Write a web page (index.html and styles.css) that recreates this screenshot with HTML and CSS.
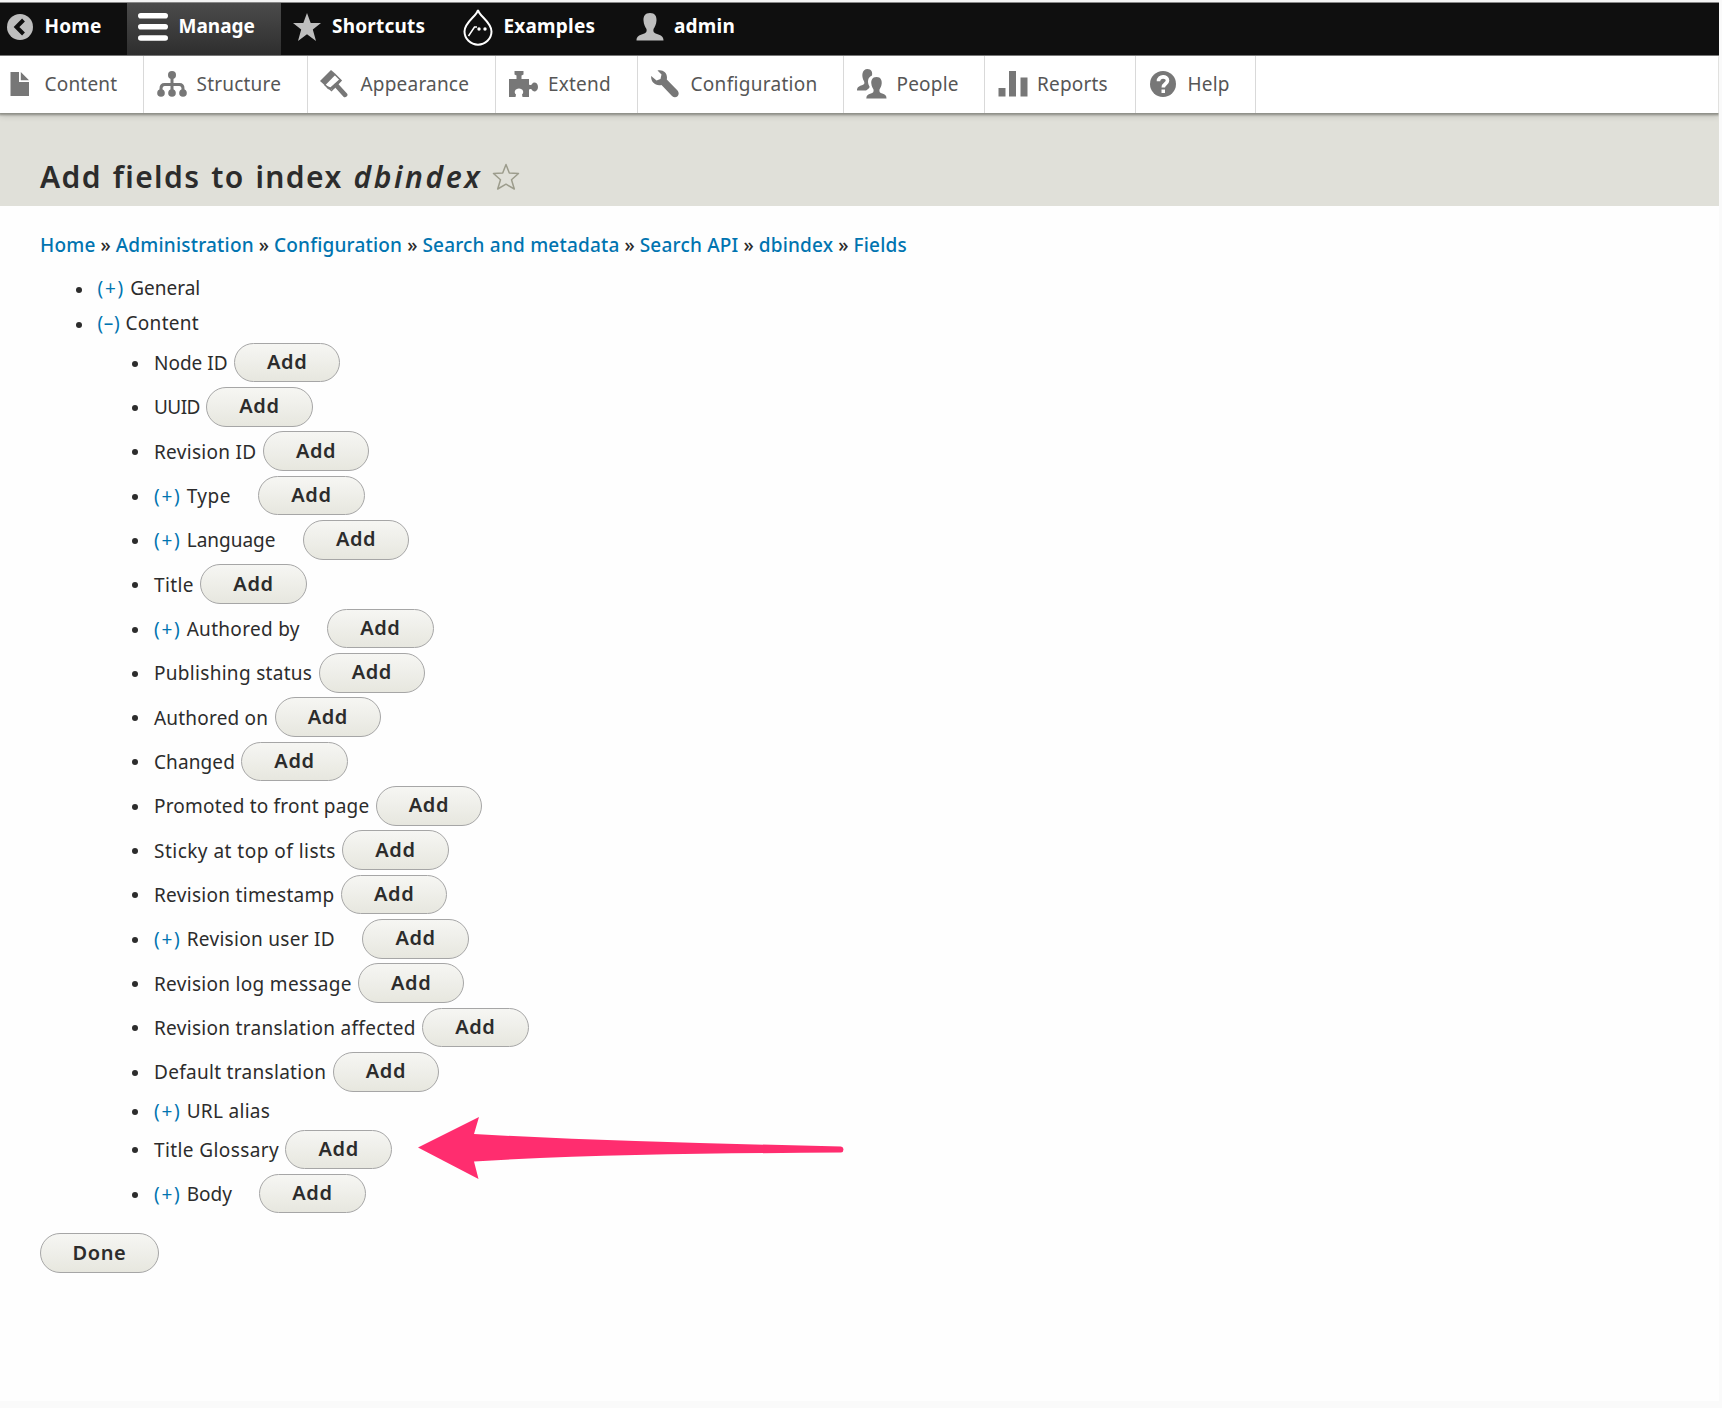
FILE: index.html
```
<!DOCTYPE html>
<html lang="en">
<head>
<meta charset="utf-8">
<title>Add fields to index dbindex</title>
<link rel="stylesheet" href="styles.css">
</head>
<body>
<div class="page">
  <nav class="bar">
    <a class="tab tab-home"><svg class="icon" viewBox="0 0 26 26" width="26" height="26"><circle cx="13" cy="13" r="13" fill="#bebebe"/><path d="M16.5 6 9.5 13l7 7" fill="none" stroke="#0f0f0f" stroke-width="4"/></svg><span>Home</span></a>
    <a class="tab tab-manage active"><svg class="icon" viewBox="0 0 30 28" width="30" height="28"><path d="M2.8 2.8h24.4M2.8 13.8h24.4M2.8 25h24.4" stroke="#fff" stroke-width="5.6" stroke-linecap="round"/></svg><span>Manage</span></a>
    <a class="tab tab-shortcuts"><svg class="icon" viewBox="0 0 28 28" width="28" height="28"><path d="M14 0l3.700 10H28l-8.200 6.600L23 28l-9-6.800L5 28l3.200-11.400L0 10h10.300z" fill="#bebebe"/></svg><span>Shortcuts</span></a>
    <a class="tab tab-examples"><svg class="icon" viewBox="0 0 30 38" width="30" height="38"><path d="M15 2C14 8 1.500 14 1.500 23.500a13.500 13.200 0 0 0 27 0C28.500 14 16 8 15 2z" fill="none" stroke="#fff" stroke-width="2"/><path d="M5.500 28 11.500 19H14" fill="none" stroke="#fff" stroke-width="1.500"/><circle cx="16" cy="21" r="1.700" fill="#fff"/><circle cx="22" cy="21" r="1.700" fill="#fff"/></svg><span>Examples</span></a>
    <a class="tab tab-user"><svg class="icon" viewBox="0 0 28 28" width="28" height="28"><path d="M14 0c5 0 6.800 3.500 6.500 7.500-.2 4-1.800 6.500-3 8.500-.6 3 .5 4 3.500 5 4 1.200 6.500 2.500 6.500 6.500H.5c0-4 2.500-5.300 6.500-6.500 3-1 4.100-2 3.500-5-1.200-2-2.800-4.500-3-8.500C7.200 3.500 9 0 14 0z" fill="#bebebe"/></svg><span>admin</span></a>
  </nav>
  <nav class="tray">
    <a class="item item-content"><svg class="icon" viewBox="0 0 20 24" width="20" height="24"><path d="M.5 0H9v10h10v14H.5zM10.800 0 19 8.300h-8.200z" fill="#777"/></svg><span>Content</span></a>
    <a class="item item-structure"><svg class="icon" viewBox="0 0 30 26" width="30" height="26"><g fill="#777"><circle cx="15" cy="4" r="4"/><circle cx="4" cy="22" r="3.800"/><circle cx="15" cy="22" r="3.800"/><circle cx="26" cy="22" r="3.800"/></g><path d="M15 4v18M4 22v-4.500c0-3 1-4 3.500-4h15c2.500 0 3.500 1 3.500 4V22" fill="none" stroke="#777" stroke-width="3"/></svg><span>Structure</span></a>
    <a class="item item-appearance"><svg class="icon" viewBox="0 0 28 28" width="28" height="28"><path d="M0 11 11 0l5 4.200L5 15.500z" fill="#777"/><path d="M15 4.500l6 6L11.500 20.500 4.500 14.500" fill="none" stroke="#777" stroke-width="1.600"/><path d="M5 15.500l3 3.800 6-.5 7-7.500-1-2.500-9.500 8.500z" fill="#777"/><path d="M16.500 15.500l8.500 9.300" stroke="#777" stroke-width="4.800" stroke-linecap="round"/></svg><span>Appearance</span></a>
    <a class="item item-extend"><svg class="icon" viewBox="0 0 30 26" width="30" height="26"><path d="M0 8h7.500V4.500L5.500 3.500V0h9v3.500l-2 1V8H20v5.500c1.500 1 2.500.5 3.200-.8 1.300-2 5.800-1.500 5.800 3.300s-4.500 5.300-5.800 3.300c-.7-1.300-1.700-1.800-3.200-.8V26h-6.500l-.5-2.500c2.500-2 1-6-3-6s-5.500 4-3 6L6.500 26H0z" fill="#777"/></svg><span>Extend</span></a>
    <a class="item item-config"><svg class="icon" viewBox="0 0 28 28" width="28" height="28"><path d="M6.500.5C12-1 17 3 15.800 9.500L26.500 20.500c3.500 4-1.500 9-5.500 5.500L10.500 15C4.500 16.500-.5 12 .2 6l5.300 4.500 4-1.500 1-4.500z" fill="#777"/></svg><span class="track-3">Configuration</span></a>
    <a class="item item-people"><svg class="icon" viewBox="0 0 30 30" width="30" height="30"><g fill="#777"><path d="M10.500 0c4 0 5.200 3 4.500 6.500-4 1.500-5.200 6-2.500 11 .5 1.500-1.500 2.500-3.500 4H0c0-3.500 2-4.300 5-5.300 2.500-.9 2.800-2 2-4C4 7 5 0 10.500 0z"/><path d="M19.500 8c4.500 0 5.500 3.500 5.200 6.500-.3 3-1.300 4.500-2.200 6-.5 2.500.5 3.200 2.700 4 3 1 4.300 2 4.300 5H9.300c0-3 1.500-4 4.500-5 2.200-.8 3.200-1.500 2.700-4-.9-1.500-1.900-3-2.200-6-.3-3 .7-6.500 5.200-6.500z"/></g></svg><span>People</span></a>
    <a class="item item-reports"><svg class="icon" viewBox="0 0 30 26" width="30" height="26"><path d="M.5 17h7v8.500h-7zM11 0h7v25.500h-7zM22.500 6.500h7v19h-7z" fill="#777"/></svg><span>Reports</span></a>
    <a class="item item-help"><svg class="icon" viewBox="0 0 26 26" width="26" height="26"><circle cx="13" cy="13" r="13" fill="#777"/><path d="M8.500 10.200C8.500 4.500 17.500 4.500 17.500 9.500c0 3.500-4.200 3-4.200 7" fill="none" stroke="#fff" stroke-width="3.600"/><path d="M11.500 18.500H15V22h-3.500z" fill="#fff"/></svg><span>Help</span></a>
  </nav>
  <header class="header">
    <h1 class="title">Add fields to index <em>dbindex</em></h1>
    <svg class="fav" viewBox="0 0 28 28" width="28" height="28"><path d="M14 1.500l3.300 8.500 9.200.5-7 6.200 2.800 9.300-8.300-4.800L5.700 26l2.800-9.300-7-6.200 9.200-.5z" fill="none" stroke="#9c9c8c" stroke-width="1.500" stroke-linejoin="round"/></svg>
  </header>
  <main class="content">
    <div class="breadcrumb"><a>Home</a> » <a>Administration</a> » <a>Configuration</a> » <a>Search and metadata</a> » <a>Search API</a> » <a>dbindex</a> » <a>Fields</a></div>
    <ul class="tree">
      <li class="group"><a class="toggle">(+)</a><span>General</span></li>
      <li class="group"><a class="toggle open">(–)</a><span class="track-3">Content</span></li>
    </ul>
    <ul class="fields">
      <li><span>Node ID</span><button>Add</button></li>
      <li><span class="tight">UUID</span><button>Add</button></li>
      <li><span class="track-3">Revision ID</span><button>Add</button></li>
      <li class="more"><a class="toggle">(+)</a><span class="track-5">Type</span><button>Add</button></li>
      <li class="more"><a class="toggle">(+)</a><span>Language</span><button>Add</button></li>
      <li><span class="track-4">Title</span><button>Add</button></li>
      <li class="more"><a class="toggle">(+)</a><span class="track-3">Authored by</span><button>Add</button></li>
      <li><span class="track-3">Publishing status</span><button>Add</button></li>
      <li><span class="track-2">Authored on</span><button>Add</button></li>
      <li><span class="track-1">Changed</span><button>Add</button></li>
      <li><span class="track-2">Promoted to front page</span><button>Add</button></li>
      <li><span class="track-5">Sticky at top of lists</span><button>Add</button></li>
      <li><span class="track-3">Revision timestamp</span><button>Add</button></li>
      <li class="more"><a class="toggle">(+)</a><span class="track-3">Revision user ID</span><button>Add</button></li>
      <li><span class="track-3">Revision log message</span><button>Add</button></li>
      <li><span class="track-3">Revision translation affected</span><button>Add</button></li>
      <li><span class="track-3">Default translation</span><button>Add</button></li>
      <li class="plain"><a class="toggle">(+)</a><span class="track-3">URL alias</span></li>
      <li><span class="track-4">Title Glossary</span><button>Add</button></li>
      <li class="more"><a class="toggle">(+)</a><span>Body</span><button>Add</button></li>
    </ul>
    <button class="done">Done</button>
  </main>
  <svg class="arrow" viewBox="0 0 430 66" width="430" height="66"><path d="M2 32.500 63 2l-5 17C180 26 300 28.500 425 31.500q2.500.5 2.500 3t-2.500 3C300 38.500 180 39 58 46.500L62.500 64z" fill="#ff2d6f"/></svg>
</div>
</body>
</html>
```
FILE: styles.css
```
* { box-sizing: border-box; }
body { margin: 0; background: #fafafa; color: #2c2c2c; font: 19px/1.3 "Noto Sans", "Open Sans", sans-serif; }
a { color: #0074b0; text-decoration: none; }
.page { position: relative; width: 1718.500px; height: 1401px; background: #fefefe; border-top: 2px solid #f4f4f4; }
.icon { flex: none; display: block; }

/* letter-spacing steps for labels */
.tight { letter-spacing: -.55px; }
.track-1 { letter-spacing: .1px; }
.track-2 { letter-spacing: .2px; }
.track-3 { letter-spacing: .3px; }
.track-4 { letter-spacing: .4px; }
.track-5 { letter-spacing: .48px; }

.bar { display: flex; height: 54px; background: #0f0f0f; border-top: 1px solid #888; border-bottom: 1px solid #777; letter-spacing: .2px; }
.tab { display: flex; align-items: center; height: 52px; color: #fff; font-weight: 700; padding-bottom: 4px; }
.tab span { margin-bottom: 1.500px; }
.tab-home { width: 126.500px; padding-left: 7px; gap: 11.500px; }
.tab-manage { width: 154px; padding-left: 11px; gap: 11px; letter-spacing: 0; }
.tab-shortcuts { width: 171px; padding-left: 12px; gap: 11.500px; }
.tab-examples { width: 170px; padding-left: 11.500px; gap: 10.500px; }
.tab-user { padding-left: 14px; gap: 10.500px; }
.active { background: linear-gradient(#4b4b4b, #2e2e2e); }

.tray { position: relative; display: flex; height: 56.500px; background: #fff; box-shadow: 0 1px 2px 1px #8e8f88, 0 2px 7px rgba(0,0,0,.2); clip-path: inset(0 0 -20px 0); letter-spacing: .2px; }
.item { display: flex; align-items: center; color: #565656; border-right: 1.500px solid #d9d9d9; padding-bottom: 1px; }
.item span { margin-top: .5px; }
.item-content { width: 144px; padding-left: 10px; gap: 14.500px; }
.item-structure { width: 164px; padding-left: 13px; gap: 9.500px; }
.item-appearance { width: 187.500px; padding-left: 12px; gap: 12.500px; }
.item-extend { width: 142px; padding-left: 13px; gap: 9.500px; }
.item-config { width: 206px; padding-left: 13px; gap: 12px; }
.item-people { width: 141px; padding-left: 13.500px; gap: 9.500px; }
.item-reports { width: 151px; padding-left: 13px; gap: 9.500px; }
.item-help { width: 120px; padding-left: 14px; gap: 12px; }

.header { display: flex; align-items: flex-start; height: 93.500px; padding: 44px 0 0 40px; background: #e0e0d9; }
.title { margin: 0; font-size: 30px; line-height: 40px; font-weight: 600; letter-spacing: 1.400px; word-spacing: 1.600px; white-space: nowrap; }
.title em { letter-spacing: 2.600px; }
.fav { margin: 6px 0 0 9.500px; }

.content { padding: 26px 0 0 40px; }
.breadcrumb { height: 26px; font-weight: 500; line-height: 26px; }
.breadcrumb a { letter-spacing: .2px; }
ul { margin: 0; padding: 0; list-style: none; }
li { display: flex; align-items: center; height: 44.340px; white-space: nowrap; }
li::before { content: ""; flex: none; width: 6px; height: 6px; margin: 2px 16px 0 0; border-radius: 50%; background: #2c2c2c; }
.tree { padding: 13px 0 0 35.500px; }
.group { height: 35.200px; }
.toggle { letter-spacing: 1.700px; margin-right: 5.300px; }
.open { letter-spacing: .6px; }
.fields { margin-top: -1px; padding-left: 92px; }
.fields li > a, .fields li > span { margin-top: 1.500px; }
.plain { height: 33.300px; }
button { width: 106.500px; height: 39.500px; margin-left: 6.300px; padding: 0 0 2px; border: 1.500px solid #a6a6a6; border-radius: 20px; background: linear-gradient(#f6f6f3, #e7e7df); color: #2c2c2c; font: 600 20px "Noto Sans", sans-serif; letter-spacing: .6px; }
.more button { margin-left: 27.300px; }
.done { width: 119px; margin: 17.500px 0 0; }
.arrow { position: absolute; left: 416px; top: 1113px; }
```
